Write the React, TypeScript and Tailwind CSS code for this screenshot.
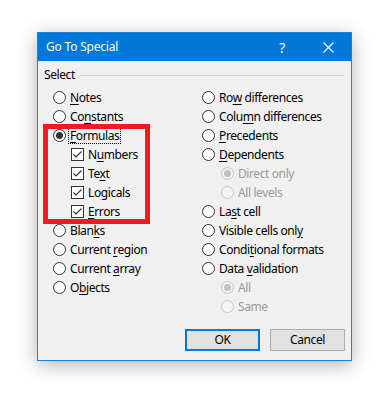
import React from "react";

const FONT = { fontFamily: '"Noto Sans", "Liberation Sans", sans-serif' };

function Label({ text, u, disabled }: { text: string; u?: number; disabled?: boolean }) {
  if (u === undefined) return <span className={disabled ? "text-[#9a9a9a]" : "text-black"}>{text}</span>;
  return (
    <span className={disabled ? "text-[#9a9a9a]" : "text-black"}>
      {text.slice(0, u)}
      <span className="underline underline-offset-[2px]">{text[u]}</span>
      {text.slice(u + 1)}
    </span>
  );
}

function Radio({ checked, disabled }: { checked?: boolean; disabled?: boolean }) {
  return (
    <span
      className={`flex h-[13px] w-[13px] shrink-0 items-center justify-center rounded-full border ${
        disabled ? "border-[#c4c4c4] bg-[#f4f4f4]" : "border-[#333333] bg-white"
      }`}
    >
      {checked && (
        <span className={`h-[7px] w-[7px] rounded-full ${disabled ? "bg-[#c0c0c0]" : "bg-[#333333]"}`} />
      )}
    </span>
  );
}

function Check() {
  return (
    <span className="flex h-[13px] w-[13px] shrink-0 items-center justify-center border border-[#333333] bg-white">
      <svg width="11" height="11" viewBox="0 0 11 11">
        <path d="M1.5 5.5 L4 8 L9.5 2.5" fill="none" stroke="#333333" strokeWidth="1.2" />
      </svg>
    </span>
  );
}

type Item = { t: string; u?: number; kind: "radio" | "check" | "sub"; checked?: boolean; disabled?: boolean; focus?: boolean };

const left: Item[] = [
  { t: "Notes", u: 0, kind: "radio" },
  { t: "Constants", u: 2, kind: "radio" },
  { t: "Formulas", u: 0, kind: "radio", checked: true, focus: true },
  { t: "Numbers", u: 1, kind: "check" },
  { t: "Text", u: 2, kind: "check" },
  { t: "Logicals", u: 2, kind: "check" },
  { t: "Errors", u: 0, kind: "check" },
  { t: "Blanks", u: 4, kind: "radio" },
  { t: "Current region", u: 8, kind: "radio" },
  { t: "Current array", u: 8, kind: "radio" },
  { t: "Objects", u: 1, kind: "radio" },
];

const right: Item[] = [
  { t: "Row differences", u: 2, kind: "radio" },
  { t: "Column differences", u: 4, kind: "radio" },
  { t: "Precedents", u: 0, kind: "radio" },
  { t: "Dependents", u: 0, kind: "radio" },
  { t: "Direct only", kind: "sub", checked: true, disabled: true },
  { t: "All levels", kind: "sub", disabled: true },
  { t: "Last cell", u: 2, kind: "radio" },
  { t: "Visible cells only", u: 17, kind: "radio" },
  { t: "Conditional formats", u: 5, kind: "radio" },
  { t: "Data validation", u: 5, kind: "radio" },
  { t: "All", kind: "sub", checked: true, disabled: true },
  { t: "Same", kind: "sub", disabled: true },
];

function Row({ it, subPad }: { it: Item; subPad: string }) {
  const pad = it.kind === "radio" ? "" : subPad;
  return (
    <div className={`flex h-[19px] items-center gap-[4px] ${pad}`}>
      {it.kind === "check" ? <Check /> : <Radio checked={it.checked} disabled={it.disabled} />}
      {it.focus ? (
        <span className="-mx-[2px] border border-dotted border-black px-[1px] leading-[14px]">
          <Label text={it.t} u={it.u} disabled={it.disabled} />
        </span>
      ) : (
        <Label text={it.t} u={it.u} disabled={it.disabled} />
      )}
    </div>
  );
}

export default function App() {
  return (
    <div className="h-[393px] w-[382px] bg-white pl-[37px] pt-[32px]" style={FONT}>
      <div className="relative w-[315px] border border-[#1883d7] bg-[#f0f0f0] text-[12px] tracking-[-0.4px] shadow-[0_4px_18px_rgba(0,0,0,0.3)]">
        <div className="flex h-[28px] items-center bg-[#0078d7] pl-[8px] text-white">
          <span className="flex-1 tracking-[-0.2px]">Go To Special</span>
          <span className="flex w-[46px] justify-center text-[14px]">?</span>
          <span className="flex w-[46px] justify-center">
            <svg width="11" height="11" viewBox="0 0 11 11">
              <path d="M0.5 0.5 L10.5 10.5 M10.5 0.5 L0.5 10.5" stroke="white" strokeWidth="1.1" />
            </svg>
          </span>
        </div>
        <div className="pt-[7px]">
          <div className="flex h-[14px] items-center pl-[6px] pr-[6px]">
            <span className="text-black">Select</span>
            <span className="ml-[5px] h-px flex-1 bg-[#d9d9d9]" />
          </div>
          <div className="mt-[6px] flex">
            <div className="w-[164px] pl-[15px]">
              {left.map((it) => (
                <Row key={it.t} it={it} subPad="pl-[18px]" />
              ))}
            </div>
            <div className="flex-1">
              {right.map((it) => (
                <Row key={it.t} it={it} subPad="pl-[19px]" />
              ))}
            </div>
          </div>
          <div className="mt-[13px] flex justify-end gap-[10px] pb-[9px] pr-[6px]">
            <button className="flex h-[22px] w-[75px] items-center justify-center border-2 border-[#0078d7] bg-[#e1e1e1] text-black">
              OK
            </button>
            <button className="flex h-[22px] w-[75px] items-center justify-center border border-[#adadad] bg-[#e1e1e1] text-black">
              Cancel
            </button>
          </div>
        </div>
        <div className="absolute left-[5px] top-[91px] h-[100px] w-[107px] border-[5px] border-[#ed1c24]" />
      </div>
    </div>
  );
}
